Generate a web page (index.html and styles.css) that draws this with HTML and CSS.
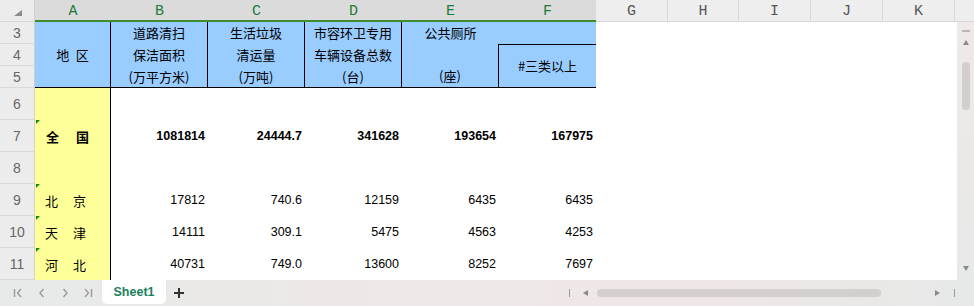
FILE: index.html
```html
<!DOCTYPE html>
<html lang="zh-CN">
<head>
  <meta charset="UTF-8">
  <meta name="viewport" content="width=device-width, initial-scale=1.0">
  <title>Sheet1</title>

  <link rel="stylesheet" href="styles.css">
</head>
<body>
  <div class="sheet">
    <!-- column headers -->
    <div class="corner">
      <svg width="8" height="6" viewBox="0 0 8 6"><path d="M8 0V6H0Z" fill="#8c8c8c"/></svg>
    </div>
    <div class="col-head sel">A</div>
    <div class="col-head sel">B</div>
    <div class="col-head sel">C</div>
    <div class="col-head sel">D</div>
    <div class="col-head sel">E</div>
    <div class="col-head sel">F</div>
    <div class="col-head">G</div>
    <div class="col-head">H</div>
    <div class="col-head">I</div>
    <div class="col-head">J</div>
    <div class="col-head">K</div>
    <div class="col-head end"></div>

    <div class="blank"></div>
    <div class="vscroll">
      <span class="vs-dash"></span>
      <span class="vs-up"></span>
      <span class="vs-thumb"></span>
      <span class="vs-down"></span>
    </div>

    <!-- table header rows 3-5 -->
    <div class="rn">3</div>
    <div class="hd a-head">地&ensp;区</div>
    <div class="hd lines">道路清扫<br>保洁面积<br>(万平方米)</div>
    <div class="hd lines">生活垃圾<br>清运量<br>(万吨)</div>
    <div class="hd lines">市容环卫专用<br>车辆设备总数<br>(台)</div>
    <div class="hd">公共厕所</div>
    <div class="hd"></div>
    <div class="rn">4</div>
    <div class="hd e45">(座)</div>
    <div class="hd f45">#三类以上</div>
    <div class="rn">5</div>

    <!-- data -->
    <div class="rn">6</div>
    <div class="area"></div>

    <div class="rn">7</div>
    <div class="area total note">全　国</div>
    <div class="num bold">1081814</div>
    <div class="num bold">24444.7</div>
    <div class="num bold">341628</div>
    <div class="num bold">193654</div>
    <div class="num bold">167975</div>

    <div class="rn">8</div>
    <div class="area"></div>

    <div class="rn">9</div>
    <div class="area note">北　京</div>
    <div class="num">17812</div>
    <div class="num">740.6</div>
    <div class="num">12159</div>
    <div class="num">6435</div>
    <div class="num">6435</div>

    <div class="rn">10</div>
    <div class="area note">天　津</div>
    <div class="num">14111</div>
    <div class="num">309.1</div>
    <div class="num">5475</div>
    <div class="num">4563</div>
    <div class="num">4253</div>

    <div class="rn">11</div>
    <div class="area note">河　北</div>
    <div class="num">40731</div>
    <div class="num">749.0</div>
    <div class="num">13600</div>
    <div class="num">8252</div>
    <div class="num">7697</div>
  </div>

  <div class="tabbar">
    <div class="nav">
      <svg width="12" height="12" viewBox="0 0 12 12"><path d="M1.5 2v8M8 2 4.5 6 8 10" fill="none" stroke="#9a9a9a" stroke-width="1.4"/></svg>
      <svg width="12" height="12" viewBox="0 0 12 12"><path d="M7.5 2 4 6l3.5 4" fill="none" stroke="#9a9a9a" stroke-width="1.4"/></svg>
      <svg width="12" height="12" viewBox="0 0 12 12"><path d="M4.5 2 8 6l-3.5 4" fill="none" stroke="#9a9a9a" stroke-width="1.4"/></svg>
      <svg width="12" height="12" viewBox="0 0 12 12"><path d="M3 2l3.5 4L3 10M9.5 2v8" fill="none" stroke="#9a9a9a" stroke-width="1.4"/></svg>
    </div>
    <div class="tab">Sheet1</div>
    <svg class="add" width="12" height="12" viewBox="0 0 12 12"><path d="M6 1v10M1 6h10" stroke="#333" stroke-width="2"/></svg>

    <div class="hscroll">
      <span class="hs-bar"></span>
      <span class="hs-left"></span>
      <span class="hs-thumb"></span>
      <span class="hs-right"></span>
      <span class="hs-bar"></span>
    </div>
  </div>
</body>
</html>
```

FILE: styles.css
```css
* {
  margin: 0;
  padding: 0;
  box-sizing: border-box;
}

body {
  width: 974px;
  height: 306px;
  overflow: hidden;
  background-color: #ffffff;
  font-family: "Noto Sans CJK SC", sans-serif;
  color: #000;
}

/* Grid */
.sheet {
  display: grid;
  grid-template-columns: 35px 76px 97px 97px 97px 97px 97px 72px 71px 72px 72px 72px 1fr;
  grid-template-rows: 22px 22px 22px 22px repeat(6, 32px);
  height: 280px;
}

.corner {
  background-color: #ececec;
  border-right: 1px solid #cfcfcf;
  border-bottom: 1px solid #d6d6d6;
  padding: 10px 0 0 14px;
}

.corner svg {
  display: block;
}

/* Column headers */
.col-head {
  background-color: #eeeeee;
  color: #555;
  font-family: "Liberation Mono", monospace;
  font-size: 15px;
  line-height: 20px;
  padding-top: 2px;
  text-align: center;
  border-right: 1px solid #d8d8d8;
  border-bottom: 1px solid #d8d8d8;
}

.col-head.sel {
  background-color: #dbdbdb;
  color: #1d7a3a;
  border-right: none;
  border-bottom: 2px solid #3d8c2d;
}

.col-head.end {
  border-right: none;
}

/* Row headers */
.rn {
  grid-column: 1;
  background-color: #ececec;
  color: #666;
  font-family: "Liberation Sans", sans-serif;
  font-size: 14px;
  display: flex;
  align-items: center;
  justify-content: center;
  border-right: 1px solid #cfcfcf;
  border-bottom: 1px solid #d9d9d9;
}

.blank {
  grid-column: 8 / span 5;
  grid-row: 2 / span 9;
}

/* Table header */
.hd {
  background-color: #99ccff;
  font-size: 13px;
  line-height: 22px;
  text-align: center;
}

.a-head {
  grid-row: span 3;
  display: flex;
  align-items: center;
  justify-content: center;
  border-right: 1px solid #000;
  border-bottom: 1px solid #000;
}

.lines {
  grid-row: span 3;
  border-right: 1px solid #000;
  border-bottom: 1px solid #000;
}

.e45 {
  grid-row: span 2;
  display: flex;
  flex-direction: column;
  justify-content: flex-end;
  border-right: 1px solid #000;
  border-bottom: 1px solid #000;
}

.f45 {
  grid-row: span 2;
  display: flex;
  align-items: center;
  justify-content: center;
  border-top: 1px solid #000;
  border-bottom: 1px solid #000;
}

/* Data */
.area {
  position: relative;
  background-color: #ffff99;
  border-right: 1px solid #000;
  font-size: 13px;
  letter-spacing: 1px;
  padding-left: 10px;
  display: flex;
  align-items: center;
}

.area.total {
  font-weight: bold;
  letter-spacing: 2px;
  padding-left: 11px;
}

.note::before {
  content: "";
  position: absolute;
  top: 0;
  left: 1px;
  border-top: 4px solid #118a11;
  border-right: 4px solid transparent;
}

.num {
  font-family: "Liberation Sans", sans-serif;
  font-size: 12.5px;
  display: flex;
  align-items: center;
  justify-content: flex-end;
  padding-right: 3px;
}

.num.bold {
  font-weight: bold;
}

/* Vertical scrollbar */
.vscroll {
  grid-column: 13;
  grid-row: 2 / span 9;
  margin-left: 2px;
  background: linear-gradient(#efe9e8, #e7e9e8);
  display: flex;
  flex-direction: column;
  align-items: center;
}

.vs-dash {
  width: 8px;
  height: 2px;
  background-color: #b9b9b9;
  margin-top: 8px;
}

.vs-up {
  margin-top: 8px;
  border-left: 3.5px solid transparent;
  border-right: 3.5px solid transparent;
  border-bottom: 5px solid #8a8a8a;
}

.vs-thumb {
  width: 8px;
  height: 48px;
  margin-top: 17px;
  background-color: #d3cfce;
  border-radius: 4px;
}

.vs-down {
  margin-top: auto;
  margin-bottom: 9px;
  border-left: 3.5px solid transparent;
  border-right: 3.5px solid transparent;
  border-top: 5px solid #8a8a8a;
}

/* Sheet tabs */
.tabbar {
  height: 26px;
  display: flex;
  align-items: center;
  background: linear-gradient(90deg, #e6eae9 0%, #eee8e6 40%, #eee7e6 75%, #e6e9e8 100%);
}

.nav {
  width: 102px;
  display: flex;
  gap: 11px;
  padding-left: 13px;
}

.nav svg {
  display: block;
}

.tab {
  align-self: flex-start;
  width: 64px;
  height: 24px;
  background-color: #ffffff;
  border-radius: 0 0 5px 5px;
  color: #1a7f5a;
  font-family: "Liberation Sans", sans-serif;
  font-weight: bold;
  font-size: 12.5px;
  line-height: 25px;
  text-align: center;
}

.add {
  display: block;
  margin-left: 7px;
}

.hscroll {
  margin-left: auto;
  margin-right: 19px;
  display: flex;
  align-items: center;
}

.hs-bar {
  width: 1px;
  height: 8px;
  background-color: #9a9a9a;
}

.hs-left {
  margin-left: 13px;
  border-top: 3px solid transparent;
  border-bottom: 3px solid transparent;
  border-right: 5px solid #8a8a8a;
}

.hs-thumb {
  margin-left: 9px;
  width: 284px;
  height: 8px;
  background-color: #d3cfce;
  border-radius: 4px;
}

.hs-right {
  margin-left: 54px;
  margin-right: 14px;
  border-top: 3px solid transparent;
  border-bottom: 3px solid transparent;
  border-left: 5px solid #8a8a8a;
}
```
